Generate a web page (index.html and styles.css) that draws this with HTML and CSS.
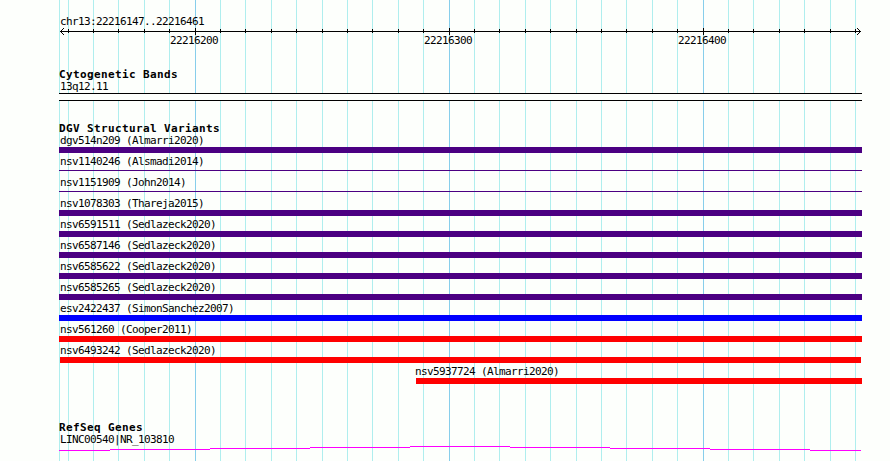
FILE: index.html
```html
<!DOCTYPE html>
<html lang="en">
<head>
  <meta charset="UTF-8">
  <title>chr13:22216147..22216461</title>
  <link rel="stylesheet" href="styles.css">
</head>
<body>
  <div class="browser-panel">
    <svg class="grid" width="890" height="461" shape-rendering="crispEdges">
      <path class="grid-minor" d="M59.5 0V461M68.5 0V461M93.5 0V461M118.5 0V461M144.5 0V461M169.5 0V461M220.5 0V461M245.5 0V461M271.5 0V461M296.5 0V461M322.5 0V461M347.5 0V461M372.5 0V461M398.5 0V461M423.5 0V461M474.5 0V461M499.5 0V461M525.5 0V461M550.5 0V461M576.5 0V461M601.5 0V461M626.5 0V461M652.5 0V461M677.5 0V461M728.5 0V461M753.5 0V461M779.5 0V461M804.5 0V461M830.5 0V461M855.5 0V461"/>
      <path class="grid-major" d="M195.5 0V461M449.5 0V461M703.5 0V461"/>
    </svg>

    <section class="ruler">
      <div class="label">chr13:22216147..22216461</div>
      <!-- x runs from 59 so ticks share coordinates with the grid -->
      <svg class="ruler-axis" width="803" height="7" viewBox="59 0 803 7" shape-rendering="crispEdges">
        <path d="M60 3.5H861"/>
        <path d="M68.5 1V5M93.5 1V5M118.5 1V5M144.5 1V5M169.5 1V5M220.5 1V5M245.5 1V5M271.5 1V5M296.5 1V5M322.5 1V5M347.5 1V5M372.5 1V5M398.5 1V5M423.5 1V5M474.5 1V5M499.5 1V5M525.5 1V5M550.5 1V5M576.5 1V5M601.5 1V5M626.5 1V5M652.5 1V5M677.5 1V5M728.5 1V5M753.5 1V5M779.5 1V5M804.5 1V5M830.5 1V5M855.5 1V5"/>
        <path d="M195.5 0V7M449.5 0V7M703.5 0V7"/>
        <path d="M61 2.5H62M62 1.5H63M63 0.5H64M61 4.5H62M62 5.5H63M63 6.5H64"/>
        <path d="M859 2.5H860M858 1.5H859M857 0.5H858M859 4.5H860M858 5.5H859M857 6.5H858"/>
      </svg>
      <div class="ruler-numbers">
        <span>22216200</span>
        <span>22216300</span>
        <span>22216400</span>
      </div>
    </section>

    <section class="track cytobands">
      <h2>Cytogenetic Bands</h2>
      <div class="label">13q12.11</div>
      <div class="band"></div>
    </section>

    <section class="track variants">
      <h2>DGV Structural Variants</h2>
      <div class="variant"><div class="label">dgv514n209 (Almarri2020)</div><div class="bar complex"></div></div>
      <div class="variant"><div class="label">nsv1140246 (Alsmadi2014)</div><div class="bar complex thin"></div></div>
      <div class="variant"><div class="label">nsv1151909 (John2014)</div><div class="bar complex thin"></div></div>
      <div class="variant"><div class="label">nsv1078303 (Thareja2015)</div><div class="bar complex"></div></div>
      <div class="variant"><div class="label">nsv6591511 (Sedlazeck2020)</div><div class="bar complex"></div></div>
      <div class="variant"><div class="label">nsv6587146 (Sedlazeck2020)</div><div class="bar complex"></div></div>
      <div class="variant"><div class="label">nsv6585622 (Sedlazeck2020)</div><div class="bar complex"></div></div>
      <div class="variant"><div class="label">nsv6585265 (Sedlazeck2020)</div><div class="bar complex"></div></div>
      <div class="variant"><div class="label">esv2422437 (SimonSanchez2007)</div><div class="bar gain"></div></div>
      <div class="variant"><div class="label">nsv561260 (Cooper2011)</div><div class="bar loss"></div></div>
      <div class="variant"><div class="label">nsv6493242 (Sedlazeck2020)</div><div class="bar loss inset"></div></div>
      <div class="variant partial"><div class="label">nsv5937724 (Almarri2020)</div><div class="bar loss"></div></div>
    </section>

    <section class="track genes">
      <h2>RefSeq Genes</h2>
      <div class="label">LINC00540|NR_103810</div>
      <svg class="intron" width="803" height="5" viewBox="59 0 803 5" shape-rendering="crispEdges">
        <path d="M59 4.5H110M110 3.5H210M210 2.5H310M310 1.5H410M410 0.5H510M510 1.5H610M610 2.5H710M710 3.5H810M810 4.5H861"/>
      </svg>
    </section>
  </div>
</body>
</html>
```
FILE: styles.css
```css
body {
  margin: 0;
  background-color: #fdfffc;
  color: #000;
  font-family: "DejaVu Sans Mono", monospace;
  font-size: 11px;
  line-height: 13px;
}
.browser-panel {
  position: relative;
  box-sizing: border-box;
  width: 890px;
  height: 461px;
  padding: 15px 28px 0 59px;
  overflow: hidden;
}
svg {
  display: block;
}
.grid {
  position: absolute;
  top: 0;
  left: 0;
  z-index: -1;
}
.grid-minor {
  stroke: #afeeee;
}
.grid-major {
  stroke: #87ceeb;
}
.label,
.ruler-numbers {
  height: 13px;
  letter-spacing: -0.622px;
  white-space: nowrap;
}
.label {
  padding-left: 1px;
}
.ruler-axis {
  stroke: #000;
}
.ruler-numbers {
  display: flex;
  gap: 206px;
  margin-top: -1px;
  padding-left: 111px;
}
.ruler-numbers span {
  width: 48px;
}
.track {
  margin-top: 21px;
}
h2 {
  height: 12px;
  margin: 0;
  font-size: 11px;
  font-weight: bold;
  letter-spacing: 0.378px;
  white-space: nowrap;
}
.band {
  box-sizing: border-box;
  height: 8px;
  border-top: 1px solid #000;
  border-bottom: 1px solid #000;
  background-color: #fdfffc;
}
.variant {
  height: 21px;
}
.variant.partial {
  margin-left: 357px;
}
.partial .label {
  padding-left: 0;
  margin-left: -1px;
}
.bar {
  height: 6px;
}
.bar.thin {
  height: 1px;
  margin-top: 2px;
}
.bar.inset {
  margin: 0 1px;
}
.complex {
  background-color: #4b0082;
}
.gain {
  background-color: #0000ff;
}
.loss {
  background-color: #ff0000;
}
.genes {
  margin-top: 35px;
}
.intron {
  stroke: #ff00ff;
}
```
